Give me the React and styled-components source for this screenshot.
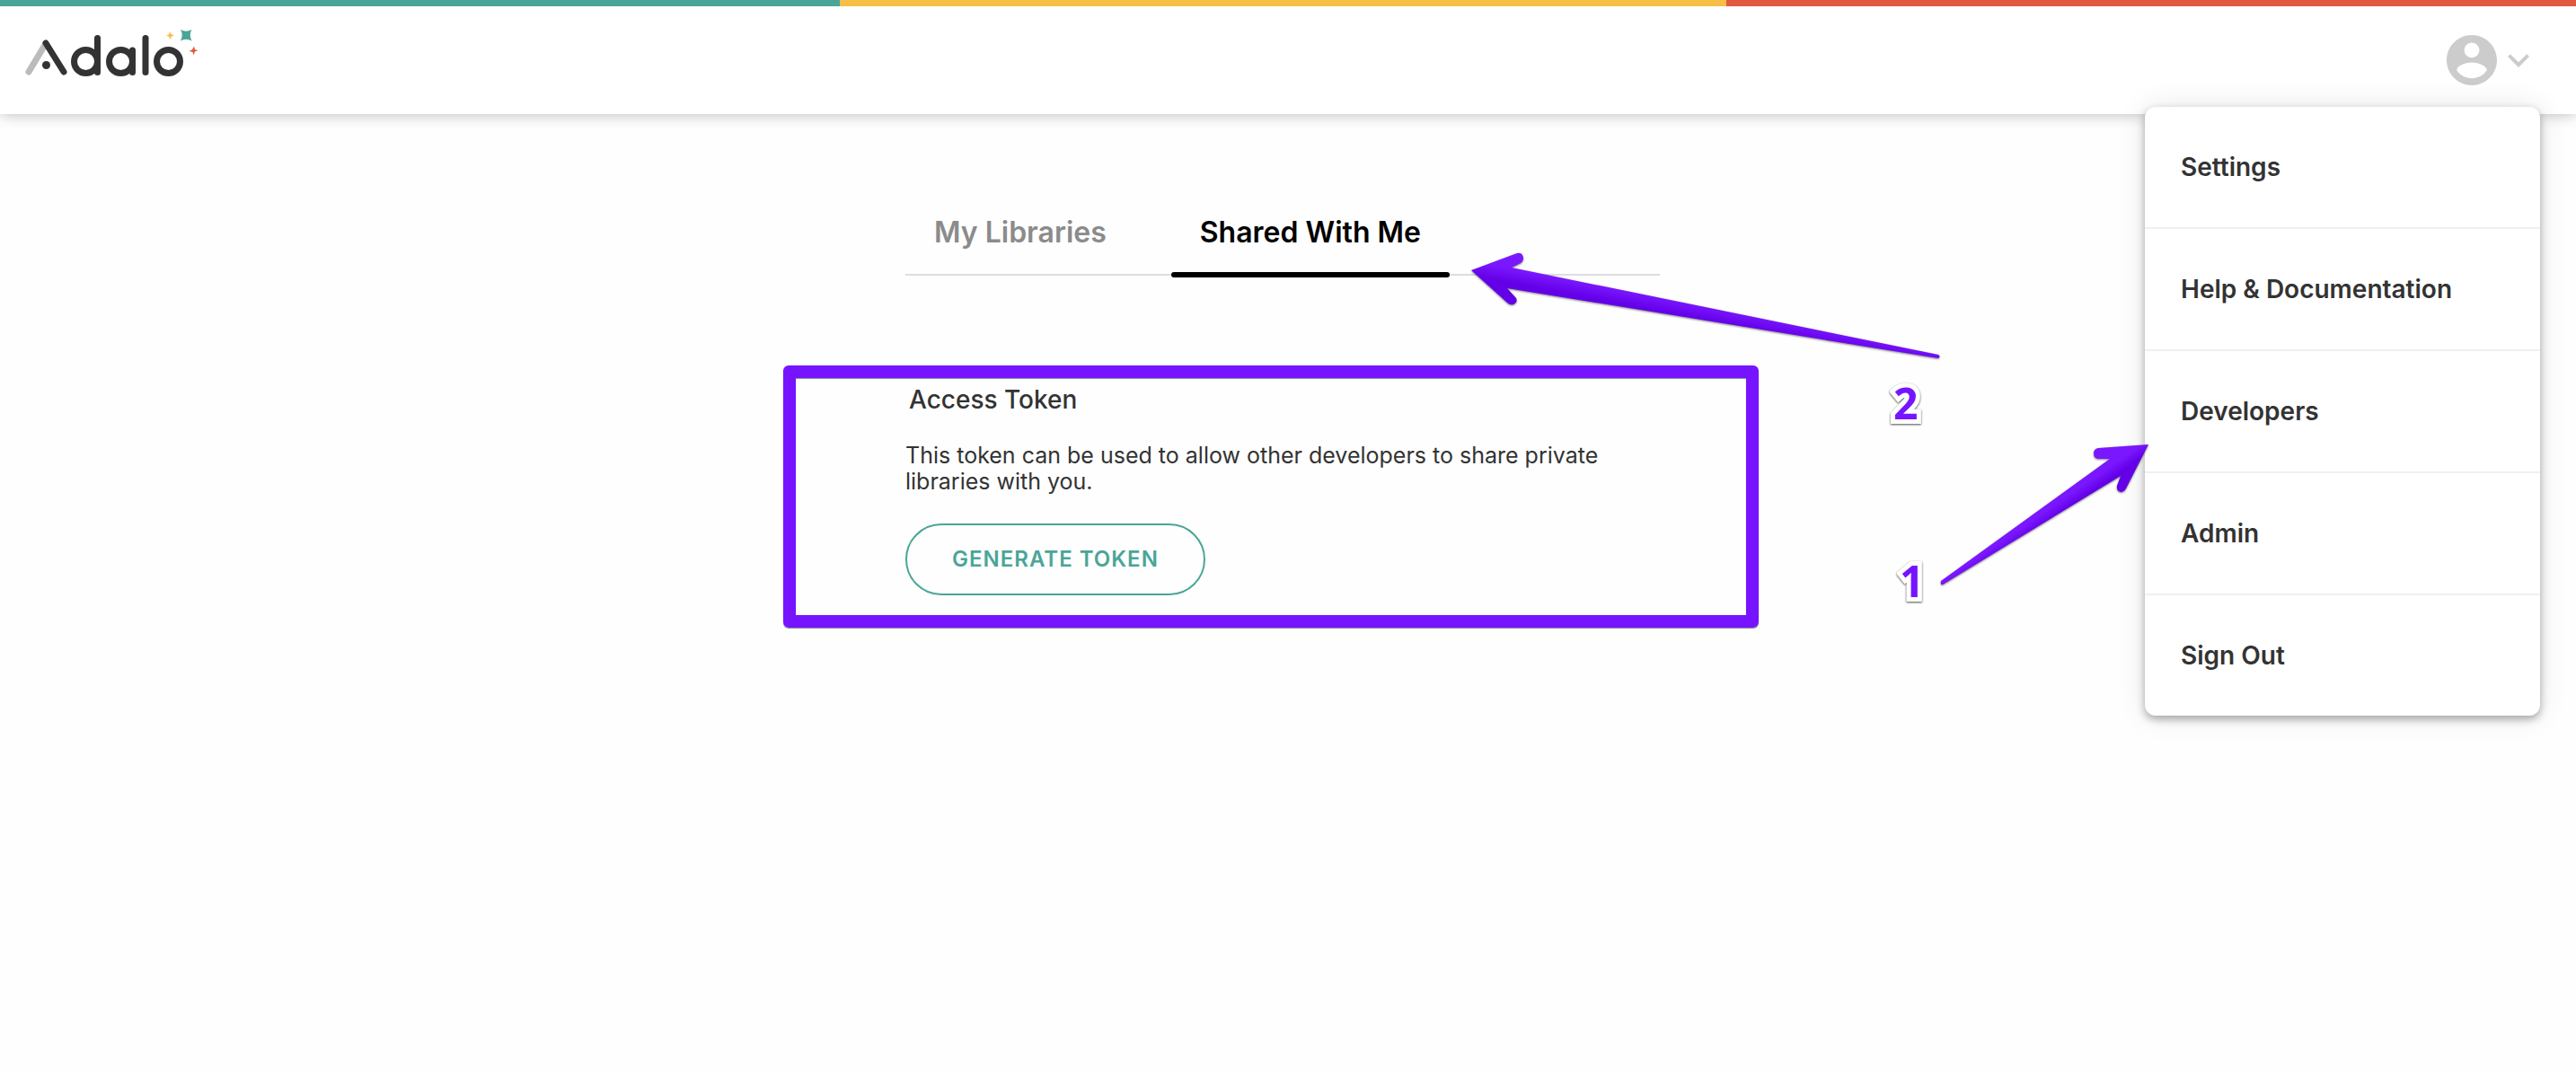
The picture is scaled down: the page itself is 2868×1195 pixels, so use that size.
import React from "react";
import styled, { createGlobalStyle } from "styled-components";

const GlobalStyle = createGlobalStyle`
  *, *::before, *::after { box-sizing: border-box; }
  body {
    margin: 0;
    background: #fefefe;
    color: #333;
    font-family: Inter, "Open Sans", sans-serif;
  }
`;

const Page = styled.div`
  min-height: 100vh;
`;

const Header = styled.header`
  position: relative;
  background: #fff;
  box-shadow: 0 0 16px rgba(0, 0, 0, 0.28);
`;

const Stripe = styled.div`
  display: grid;
  grid-template-columns: 326fr 344fr 330fr;
  height: 7px;
`;

const StripePart = styled.span`
  background: ${(p) => p.$color};
`;

const HeaderRow = styled.div`
  display: flex;
  align-items: center;
  justify-content: space-between;
  height: 120px;
  padding: 0 52px 0 28px;
`;

const HomeLink = styled.a`
  display: flex;
  padding-bottom: 18px;
`;

const AccountButton = styled.button`
  display: flex;
  align-items: center;
  gap: 12px;
  padding: 0;
  border: 0;
  background: none;
  color: #ccc;
`;

const MenuPanel = styled.nav`
  position: absolute;
  z-index: 2;
  top: 119px;
  right: 40px;
  width: 440px;
  border-radius: 12px;
  background: #fff;
  box-shadow: 0 4px 10px rgba(0, 0, 0, 0.32), 0 0 32px rgba(0, 0, 0, 0.1);
`;

const MenuList = styled.ul`
  margin: 0;
  padding: 0;
  list-style: none;
`;

const MenuItem = styled.li`
  & + & { border-top: 2px solid #f0f0f0; }
`;

const MenuLink = styled.a`
  display: flex;
  align-items: center;
  height: 134px;
  padding: 0 40px;
  color: #333;
  font-size: 28px;
  font-weight: 600;
  line-height: 32px;
  text-decoration: none;
`;

const Main = styled.main`
  width: 840px;
  margin: 0 auto;
  padding-top: 96px;
  position: relative;
  right: 6px;
`;

const Tabs = styled.div`
  position: relative;
  display: flex;
  gap: 40px;
  border-bottom: 2px solid #ddd;
`;

const Tab = styled.button`
  position: relative;
  padding: 16px 32px 26px;
  border: 0;
  background: none;
  color: ${(p) => (p.$active ? "#000" : "#8b8b8b")};
  font: 600 32px/40px Inter, "Open Sans", sans-serif;

  &::after {
    content: "";
    display: ${(p) => (p.$active ? "block" : "none")};
    position: absolute;
    left: 0;
    right: 0;
    bottom: -4px;
    height: 6px;
    border-radius: 3px;
    background: #000;
  }
`;

const TokenSection = styled.section`
  margin: 100px -110px 0 -136px;
  padding: 8px 96px 22px 122px;
  border: 14px solid #7614ff;
  border-radius: 6px;
  box-shadow: 0 1px 1px #888, inset 0 1px 1px #888;
`;

const Title = styled.h2`
  margin: 0 0 32px;
  padding-left: 4px;
  font-size: 28px;
  font-weight: 500;
  line-height: 32px;
`;

const Description = styled.p`
  margin: 0 0 32px;
  font-size: 25px;
  line-height: 29px;
`;

const OutlineButton = styled.button`
  height: 80px;
  padding: 0 50px;
  border: 2px solid #4aa598;
  border-radius: 40px;
  background: none;
  color: #4aa598;
  font: 600 24px/28px Inter, "Open Sans", sans-serif;
  letter-spacing: 1px;
`;

const Arrow = styled.svg`
  position: absolute;
  left: ${(p) => p.$left}px;
  top: ${(p) => p.$top}px;
  z-index: 1;
  overflow: visible;
  pointer-events: none;
  filter: drop-shadow(0 1px 1px rgba(0, 0, 0, 0.5));
`;

const StepNumber = styled.span`
  position: absolute;
  left: ${(p) => p.$left}px;
  top: ${(p) => p.$top}px;
  color: #7614ff;
  font: 700 48px/48px "Open Sans", "Noto Sans", sans-serif;
  -webkit-text-stroke: 10px #fff;
  paint-order: stroke fill;
  stroke-linejoin: round;
  filter: drop-shadow(0 1px 1px rgba(0, 0, 0, 0.7));
`;

function Logo() {
  return (
    <svg width="194" height="56" viewBox="28 30 194 56" fill="none" strokeWidth="7" strokeLinecap="round" role="img" aria-label="Adalo">
      <line x1="32" y1="80" x2="50" y2="50" stroke="#bbb" />
      <g stroke="#333">
        <line x1="51" y1="48" x2="71" y2="80" />
        <circle cx="95.500" cy="68.500" r="13" />
        <line x1="108.500" y1="42.500" x2="108.500" y2="80.500" />
        <circle cx="134.500" cy="68.500" r="13" />
        <line x1="147.500" y1="56" x2="147.500" y2="80.500" />
        <line x1="162" y1="42.500" x2="162" y2="80.500" />
        <circle cx="187.500" cy="68.500" r="13" />
      </g>
      <circle cx="51.500" cy="72.500" r="4.500" fill="#333" />
      <path d="M189 35L190.500 38L194 39.500L190.800 40.500L190 44L188.300 41L185 39.500L188.200 38.300Z" fill="#f7bf45" />
      <path d="M201 33Q207 36.500 213.500 33Q210 39 213.500 45.500Q207 42 201 45.500Q204.500 39 201 33Z" fill="#4aa598" />
      <path d="M216 51.500L217 55.200L220.500 56L217 57.600L215.500 61.500L214.500 58L210.500 57L214 55.300Z" fill="#e0593e" />
    </svg>
  );
}

function AccountIcon() {
  return (
    <svg width="56" height="56" viewBox="2 2 20 20" fill="currentColor" aria-hidden="true">
      <path d="M12 2C6.480 2 2 6.480 2 12s4.480 10 10 10 10-4.480 10-10S17.520 2 12 2zm0 3c1.660 0 3 1.340 3 3s-1.340 3-3 3-3-1.340-3-3 1.340-3 3-3zm0 14.200c-2.500 0-4.710-1.280-6-3.220.030-1.990 4-3.080 6-3.080 1.990 0 5.970 1.090 6 3.080-1.290 1.940-3.500 3.220-6 3.220z" />
    </svg>
  );
}

function ChevronIcon() {
  return (
    <svg width="24" height="16" viewBox="6 8 12 8" fill="currentColor" aria-hidden="true">
      <path d="M16.590 8.590L12 13.170 7.410 8.590 6 10l6 6 6-6z" />
    </svg>
  );
}

const MENU = ["Settings", "Help & Documentation", "Developers", "Admin", "Sign Out"];

export default function App() {
  return (
    <Page>
      <GlobalStyle />
      <Header>
        <Stripe>
          <StripePart $color="#4aa598" />
          <StripePart $color="#f7bf45" />
          <StripePart $color="#e0593e" />
        </Stripe>
        <HeaderRow>
          <HomeLink href="#home"><Logo /></HomeLink>
          <AccountButton type="button" aria-label="Account menu">
            <AccountIcon />
            <ChevronIcon />
          </AccountButton>
        </HeaderRow>
        <MenuPanel aria-label="Account">
          <MenuList>
            {MENU.map((label) => (
              <MenuItem key={label}>
                <MenuLink href="#menu">{label}</MenuLink>
              </MenuItem>
            ))}
          </MenuList>
          <Arrow $left={-228} $top={376} width="232" height="158" viewBox="0 0 232 158" aria-hidden="true">
            <defs>
              <linearGradient id="toMenu" gradientUnits="userSpaceOnUse" x1="186" y1="22" x2="197" y2="38">
                <stop offset="0.200" stopColor="#7a17ff" />
                <stop offset="0.800" stopColor="#6400e8" />
              </linearGradient>
            </defs>
            <path d="M232 0L176 4Q171 5 171 10Q171 16 177 16L189 16L1 152Q0 157 3 156L201 35L197 46Q196 52 201 53Q205 53 207 49Z" fill="url(#toMenu)" />
          </Arrow>
          <StepNumber $left={-273} $top={504}>1</StepNumber>
        </MenuPanel>
      </Header>
      <Main>
        <Tabs role="tablist">
          <Tab type="button" role="tab" aria-selected="false">My Libraries</Tab>
          <Tab type="button" role="tab" aria-selected="true" $active>Shared With Me</Tab>
          <Arrow $left={630} $top={59} width="522" height="117" viewBox="0 0 522 117" aria-hidden="true">
            <defs>
              <linearGradient id="toTab" gradientUnits="userSpaceOnUse" x1="120" y1="26" x2="115" y2="52">
                <stop offset="0.200" stopColor="#7a17ff" />
                <stop offset="0.800" stopColor="#6400e8" />
              </linearGradient>
            </defs>
            <path d="M0 19L51 0Q57 -1 58 5Q58 9 55 11L45 16L520 113Q523 115 520 117L40 39L50 50Q52 55 47 57Q43 58 40 55Z" fill="url(#toTab)" />
          </Arrow>
          <StepNumber $left={1100} $top={202}>2</StepNumber>
        </Tabs>
        <TokenSection>
          <Title>Access Token</Title>
          <Description>
            This token can be used to allow other developers to share private libraries with you.
          </Description>
          <OutlineButton type="button">GENERATE TOKEN</OutlineButton>
        </TokenSection>
      </Main>
    </Page>
  );
}
